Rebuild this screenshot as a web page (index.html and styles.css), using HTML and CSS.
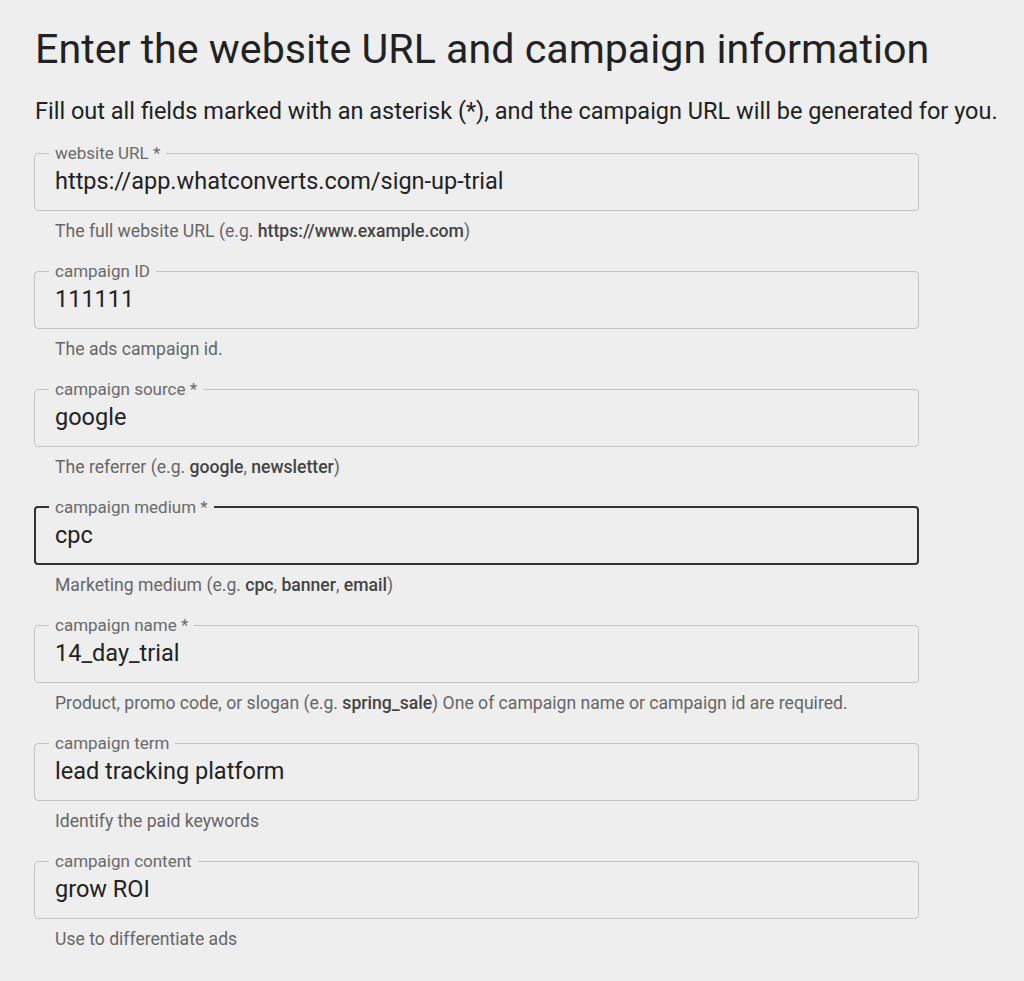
FILE: index.html
```html
<!DOCTYPE html>
<html lang="en">
<head>
    <meta charset="UTF-8">
    <meta name="viewport" content="width=device-width, initial-scale=1.0">
    <title>Campaign URL Builder</title>
    <link rel="stylesheet" href="styles.css">
</head>
<body>

    <div class="container">
        <h1>Enter the website URL and campaign information</h1>
        <p class="intro">Fill out all fields marked with an asterisk (*), and the campaign URL will be generated for you.</p>

        <div class="field">
            <fieldset class="box">
                <legend>website URL *</legend>
                <input type="text" value="https://app.whatconverts.com/sign-up-trial">
            </fieldset>
            <p class="helper">The full website URL (e.g. <b>https://www.example.com</b>)</p>
        </div>

        <div class="field">
            <fieldset class="box">
                <legend>campaign ID</legend>
                <input type="text" value="111111">
            </fieldset>
            <p class="helper">The ads campaign id.</p>
        </div>

        <div class="field">
            <fieldset class="box">
                <legend>campaign source *</legend>
                <input type="text" value="google">
            </fieldset>
            <p class="helper">The referrer (e.g. <b>google</b>, <b>newsletter</b>)</p>
        </div>

        <div class="field">
            <fieldset class="box focused">
                <legend>campaign medium *</legend>
                <input type="text" value="cpc">
            </fieldset>
            <p class="helper">Marketing medium (e.g. <b>cpc</b>, <b>banner</b>, <b>email</b>)</p>
        </div>

        <div class="field">
            <fieldset class="box">
                <legend>campaign name *</legend>
                <input type="text" value="14_day_trial">
            </fieldset>
            <p class="helper">Product, promo code, or slogan (e.g. <b>spring_sale</b>) One of campaign name or campaign id are required.</p>
        </div>

        <div class="field">
            <fieldset class="box">
                <legend>campaign term</legend>
                <input type="text" value="lead tracking platform">
            </fieldset>
            <p class="helper">Identify the paid keywords</p>
        </div>

        <div class="field">
            <fieldset class="box">
                <legend>campaign content</legend>
                <input type="text" value="grow ROI">
            </fieldset>
            <p class="helper">Use to differentiate ads</p>
        </div>
    </div>

</body>
</html>
```

FILE: styles.css
```css
body {
    font-family: Roboto, "Liberation Sans", sans-serif;
    background-color: #eeeeee;
    color: #222;
    margin: 0;
    padding: 0;
}

.container {
    padding: 25px 0 0 34px;
}

h1 {
    font-size: 41.2px;
    font-weight: 400;
    line-height: 48px;
    white-space: nowrap;
    margin: 0 0 0 1px;
}

.intro {
    font-size: 23.5px;
    line-height: 28px;
    white-space: nowrap;
    margin: 24px 0 19px 1px;
}

.field {
    width: 885px;
    margin-bottom: 20px;
}

.box {
    min-width: 0;
    margin: 0;
    padding: 0 20px 14px;
    border: 1px solid #c4c4c4;
    border-radius: 4px;
}

.box legend {
    font-size: 17px;
    line-height: 18px;
    color: #6a6a6a;
    padding: 0 6px;
    margin-left: -6px;
}

.box input {
    display: block;
    width: 100%;
    margin-top: 4px;
    padding: 0;
    border: none;
    outline: none;
    background: transparent;
    font-family: Roboto, "Liberation Sans", sans-serif;
    font-size: 23.5px;
    line-height: 30px;
    height: 30px;
    color: #222;
}

.box.focused {
    border: 2px solid #333;
    padding: 0 19px 13px;
}

.helper {
    font-size: 17.6px;
    line-height: 22px;
    color: #666;
    margin: 9px 0 0 21px;
}

.helper b {
    font-weight: 500;
    color: #444;
}
```
